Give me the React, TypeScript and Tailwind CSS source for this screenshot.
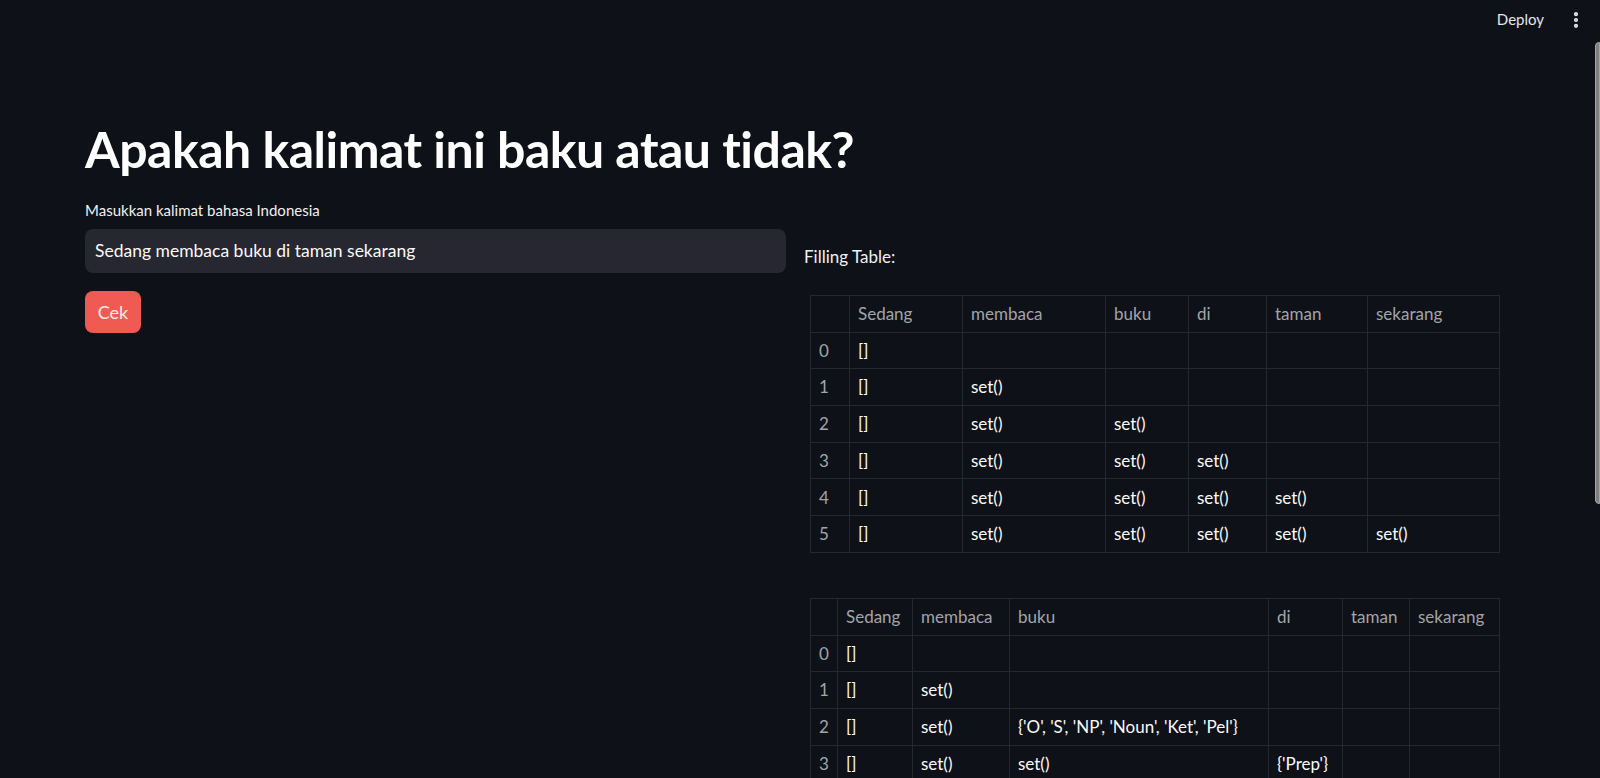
import { EllipsisVertical } from 'lucide-react';

const font = { fontFamily: '"Source Sans Pro", Lato, "Noto Sans", sans-serif' };

type Table = {
  widths: string[];
  columns: string[];
  rows: string[][];
};

const words = ['Sedang', 'membaca', 'buku', 'di', 'taman', 'sekarang'];

const fillingTable: Table = {
  widths: ['w-[39px]', 'w-[113px]', 'w-[143px]', 'w-[83px]', 'w-[78px]', 'w-[101px]', 'w-[132px]'],
  columns: words,
  rows: [
    ['[]', '', '', '', '', ''],
    ['[]', 'set()', '', '', '', ''],
    ['[]', 'set()', 'set()', '', '', ''],
    ['[]', 'set()', 'set()', 'set()', '', ''],
    ['[]', 'set()', 'set()', 'set()', 'set()', ''],
    ['[]', 'set()', 'set()', 'set()', 'set()', 'set()'],
  ],
};

// only the rows that fit above the fold
const parseTable: Table = {
  widths: ['w-[27px]', 'w-[75px]', 'w-[97px]', 'w-[259px]', 'w-[74px]', 'w-[67px]', 'w-[90px]'],
  columns: words,
  rows: [
    ['[]', '', '', '', '', ''],
    ['[]', 'set()', '', '', '', ''],
    ['[]', 'set()', "{'O', 'S', 'NP', 'Noun', 'Ket', 'Pel'}", '', '', ''],
    ['[]', 'set()', 'set()', "{'Prep'}", '', ''],
  ],
};

const DataTable = ({ table }: { table: Table }) => {
  return (
    <table className="w-[689px] table-fixed border-collapse text-[17px]">
      <thead>
        <tr className="h-[36.7px]">
          {table.widths.map((w, i) => (
            <th
              key={i}
              className={`${w} border border-[#262830] px-2 text-left font-normal text-[#a3a4a8]`}
            >
              {i === 0 ? '' : table.columns[i - 1]}
            </th>
          ))}
        </tr>
      </thead>
      <tbody>
        {table.rows.map((row, r) => (
          <tr key={r} className="h-[36.7px]">
            <td className="border border-[#262830] px-2 text-[#a3a4a8]">{r}</td>
            {row.map((cell, c) => (
              <td key={c} className="whitespace-nowrap border border-[#262830] px-2 text-[#fafafa]">
                {cell}
              </td>
            ))}
          </tr>
        ))}
      </tbody>
    </table>
  );
};

const App = () => {
  return (
    <div className="relative h-[778px] w-full overflow-hidden bg-[#0e1117] text-[#fafafa]" style={font}>
      <header className="flex h-[39px] items-center justify-end gap-[22px] pr-[14px]">
        <span className="text-[15px] text-[#e6e6e8]">Deploy</span>
        <EllipsisVertical size={20} strokeWidth={3} className="text-[#e6e6e8]" />
      </header>

      <div className="absolute right-0 top-[42px] h-[462px] w-[5px] rounded-l-sm border border-[#a5a5a5] bg-[#808080]" />

      <main className="pl-[85px] pt-[80px]">
        <h1 className="whitespace-nowrap text-[50px] font-bold leading-[60px] tracking-[-0.5px] text-white">
          Apakah kalimat ini baku atau tidak?
        </h1>

        <div className="mt-[21px] flex gap-[18px]">
          <div className="flex w-[701px] flex-col">
            <label className="text-[15px] leading-[20px] text-[#f0f0f2]">
              Masukkan kalimat bahasa Indonesia
            </label>
            <div className="mt-[9px] flex h-[44px] items-center rounded-lg bg-[#262730] px-[10px] text-[17.5px]">
              Sedang membaca buku di taman sekarang
            </div>
            <button className="mt-[18px] h-[42px] w-[56px] rounded-[8px] bg-[#ef5b53] text-[18px] text-[#fde8e7]">
              Cek
            </button>
          </div>

          <div className="flex w-[700px] flex-col pt-[45px]">
            <p className="text-[17px] leading-[24px] text-[#f0f0f2]">Filling Table:</p>
            <div className="ml-[6px] mt-[26px]">
              <DataTable table={fillingTable} />
            </div>
            <div className="ml-[6px] mt-[45px]">
              <DataTable table={parseTable} />
            </div>
          </div>
        </div>
      </main>
    </div>
  );
};

export default App;
